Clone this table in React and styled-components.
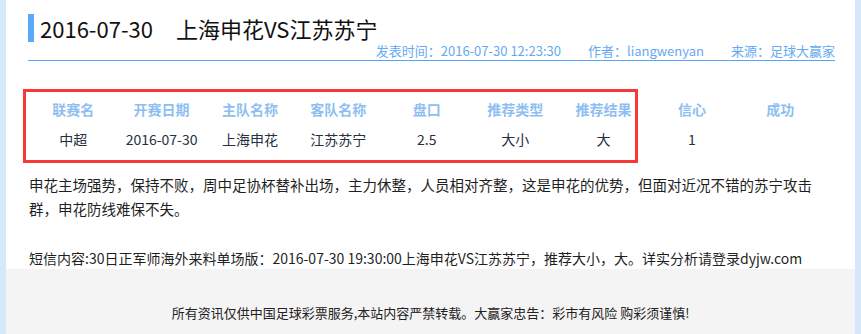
import React from "react";
import styled, { createGlobalStyle } from "styled-components";

const GlobalStyle = createGlobalStyle`
  html, body {
    margin: 0;
    padding: 0;
    background: #d6e9fc;
  }
  body {
    font-family: "Noto Sans CJK SC", "Noto Sans", sans-serif;
    color: #222;
  }
`;

const columns = ["联赛名", "开赛日期", "主队名称", "客队名称", "盘口", "推荐类型", "推荐结果", "信心", "成功"];
const row = ["中超", "2016-07-30", "上海申花", "江苏苏宁", "2.5", "大小", "大", "1", ""];

function App() {
  return (
    <>
      <GlobalStyle />
      <PageStyled>
        <Article>
          <Header>
            <Title>
              <span className="date">2016-07-30</span>
              上海申花VS江苏苏宁
            </Title>
            <Meta>
              <span>发表时间：2016-07-30 12:23:30</span>
              <span>作者：liangwenyan</span>
              <span>来源：足球大赢家</span>
            </Meta>
          </Header>

          <TableWrap>
            <Highlight />
            <Grid>
              {columns.map((c) => (
                <HeadCell key={c}>{c}</HeadCell>
              ))}
              {row.map((v, i) => (
                <Cell key={i}>{v}</Cell>
              ))}
            </Grid>
          </TableWrap>

          <Paragraph>
            申花主场强势，保持不败，周中足协杯替补出场，主力休整，人员相对齐整，这是申花的优势，但面对近况不错的苏宁攻击群，申花防线难保不失。
          </Paragraph>

          <Sms>
            短信内容:30日正军师海外来料单场版：2016-07-30 19:30:00上海申花VS江苏苏宁，推荐大小，大。详实分析请登录dyjw.com
          </Sms>
        </Article>

        <Footer>所有资讯仅供中国足球彩票服务,本站内容严禁转载。大赢家忠告：彩市有风险 购彩须谨慎!</Footer>
      </PageStyled>
    </>
  );
}

const PageStyled = styled.div`
  margin-left: 6px;
  width: 849px;
  background: #fff;
`;

const Article = styled.div`
  padding: 14px 0 0 22px;
`;

const Header = styled.div`
  width: 807px;
  border-bottom: 1px solid #55a5f6;
`;

const Title = styled.h1`
  margin: 0;
  height: 28px;
  line-height: 28px;
  border-left: 6px solid #5aa8f8;
  padding-left: 6px;
  font-size: 22px;
  font-weight: normal;
  color: #111;
  .date {
    margin-right: 23px;
  }
`;

const Meta = styled.div`
  display: flex;
  justify-content: flex-end;
  gap: 27px;
  height: 18px;
  line-height: 18px;
  font-size: 13px;
  color: #66a9f2;
`;

const TableWrap = styled.div`
  position: relative;
  margin: 33px 0 0 1px;
  width: 796px;
`;

const Highlight = styled.div`
  position: absolute;
  left: -6px;
  top: -5px;
  width: 609px;
  height: 68px;
  border: 3px solid #f73838;
  pointer-events: none;
`;

const Grid = styled.div`
  display: grid;
  grid-template-columns: repeat(9, 88.4px);
  grid-auto-rows: 30px;
`;

const HeadCell = styled.div`
  display: flex;
  align-items: center;
  justify-content: center;
  font-size: 14px;
  font-weight: bold;
  color: #8ebff0;
`;

const Cell = styled(HeadCell)`
  font-weight: normal;
  color: #26303f;
`;

const Paragraph = styled.p`
  margin: 19px 0 0 1px;
  width: 792px;
  font-size: 14.5px;
  line-height: 24px;
  color: #1f1f1f;
`;

const Sms = styled.p`
  margin: 26px 0 0 1px;
  font-size: 14px;
  line-height: 22px;
  color: #1f1f1f;
`;

const Footer = styled.div`
  background: #f4f4f4;
  padding: 35px 0 30px;
  text-align: center;
  font-size: 13px;
  line-height: 18px;
  color: #222;
`;

export default App;
